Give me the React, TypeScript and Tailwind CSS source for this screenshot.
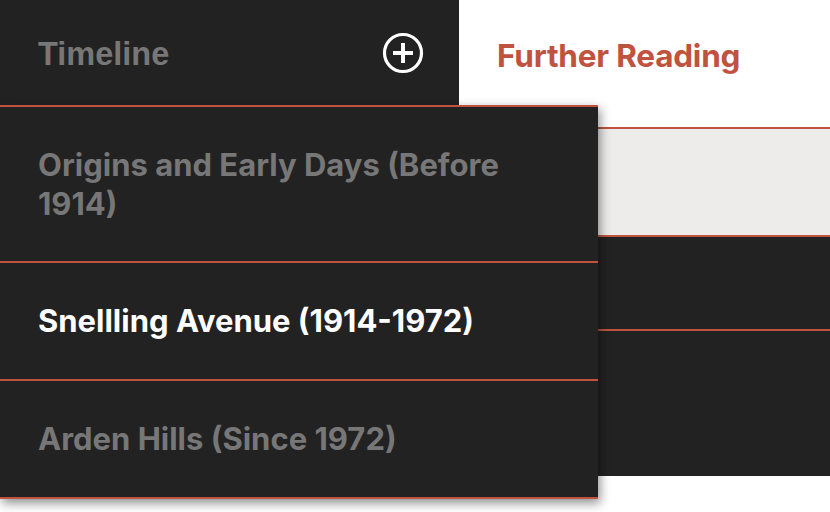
import React from "react";

const franklin = { fontFamily: '"Inter", "Liberation Sans", sans-serif' };
const arial = { fontFamily: '"Liberation Sans", Arial, sans-serif' };

function PlusCircle() {
  return (
    <svg width="44" height="44" viewBox="0 0 44 44" fill="none">
      <circle cx="22" cy="22" r="18.5" stroke="white" strokeWidth="3.2" />
      <path d="M22 12V32M12 22H32" stroke="white" strokeWidth="4" />
    </svg>
  );
}

export default function App() {
  return (
    <div className="relative w-[830px] h-[512px] overflow-hidden bg-white">
      {/* header row */}
      <div className="flex h-[105px]">
        <div className="w-[459px] bg-[#222222] flex items-center justify-between pl-[38px] pr-[34px]">
          <span className="mt-[4px] text-[32.5px] font-bold text-[#777777] leading-none" style={arial}>
            Timeline
          </span>
          <PlusCircle />
        </div>
        <div className="flex-1 bg-white flex items-center pl-[38px]">
          <span className="mt-[6px] text-[31.5px] font-bold text-[#c0533f] leading-none tracking-[-0.2px]" style={franklin}>
            Further Reading
          </span>
        </div>
      </div>
      {/* background rows */}
      <div className="flex flex-col mt-[22px]">
        <div className="h-[2px] bg-[#c0533f]" />
        <div className="h-[106px] bg-[#edecea]" />
        <div className="h-[2px] bg-[#c0533f]" />
        <div className="h-[92px] bg-[#222222]" />
        <div className="h-[2px] bg-[#c0533f]" />
        <div className="h-[145px] bg-[#222222]" />
      </div>

      {/* dropdown */}
      <div className="absolute left-0 top-[105px] w-[598px] bg-[#222222] border-t-2 border-b-2 border-[#c0533f] shadow-[2px_4px_10px_rgba(0,0,0,0.45)]">
        <div className="px-[38px] py-[38px] text-[31px] font-bold leading-[39px] text-[#777777]" style={franklin}>
          Origins and Early Days (Before 1914)
        </div>
        <div className="h-[2px] bg-[#c0533f]" />
        <div className="px-[38px] py-[38px] text-[31px] font-bold leading-[40px] text-white" style={franklin}>
          Snellling Avenue (1914-1972)
        </div>
        <div className="h-[2px] bg-[#c0533f]" />
        <div className="px-[38px] py-[38px] text-[31px] font-bold leading-[40px] text-[#777777]" style={franklin}>
          Arden Hills (Since 1972)
        </div>
      </div>
    </div>
  );
}
